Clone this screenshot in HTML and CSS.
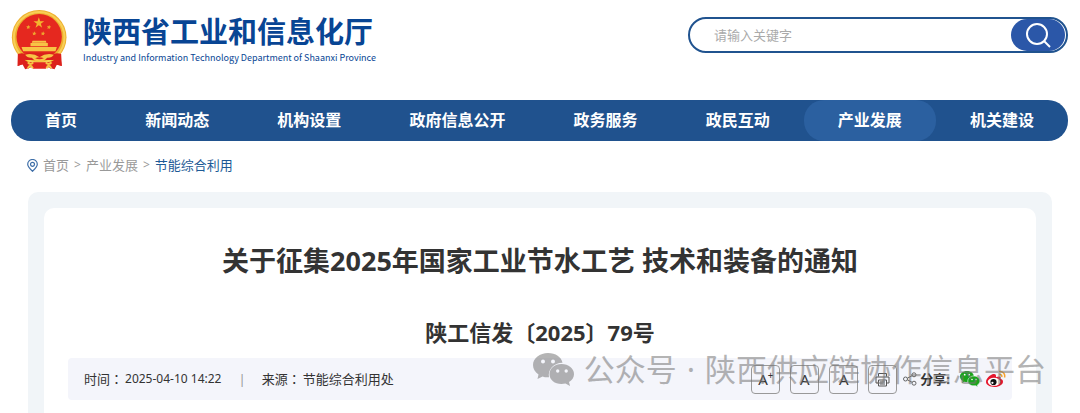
FILE: index.html
```html
<!DOCTYPE html>
<html lang="zh-CN">
<head>
<meta charset="utf-8">
<meta name="viewport" content="width=device-width, initial-scale=1">
<title>陕西省工业和信息化厅</title>
<link rel="stylesheet" href="styles.css">
</head>
<body>
<header class="header">
    <div class="brand">
        <svg class="emblem" viewBox="0 0 170 180" aria-hidden="true">
            <path d="M26 118 L20 168 L34 163 L42 178 L60 172 L85 158 L110 172 L130 178 L137 164 L152 168 L144 118 Z" fill="#d9201c"/>
            <circle cx="84" cy="82" r="82" fill="#eeb02e"/>
            <circle cx="84" cy="82" r="76" fill="none" stroke="#f8cf57" stroke-width="6"/>
            <circle cx="84" cy="80" r="68" fill="#e5281f"/>
            <path d="M83 22 L87 34 L99 34 L89 41 L93 53 L83 46 L73 53 L77 41 L67 34 L79 34 Z" fill="#f3b62f"/>
            <g fill="#efa52e">
                <path d="M52 45 L54 49 L58 50 L54 53 L55 57 L51 55 L47 57 L48 52 L45 49 L50 49 Z"/>
                <path d="M114 45 L116 49 L120 50 L116 53 L117 57 L113 55 L109 57 L110 52 L107 49 L112 49 Z"/>
                <path d="M70 64 L72 68 L76 69 L72 72 L73 76 L69 74 L65 76 L66 71 L63 68 L68 68 Z"/>
                <path d="M96 64 L98 68 L102 69 L98 72 L99 76 L95 74 L91 76 L92 71 L89 68 L94 68 Z"/>
            </g>
            <path d="M64 92 H104 L106 98 H62 Z M58 99 H110 V109 H58 Z M31 111 H137 L133 124 H36 Z" fill="#f7c445"/>
            <path d="M20 132 Q34 126 50 134 L42 152 L58 162 L52 176 L34 163 L19 168 Z" fill="#dc211c"/>
            <path d="M150 132 Q136 126 120 134 L128 152 L112 162 L118 176 L136 163 L152 168 Z" fill="#dc211c"/>
            <path d="M46 128 H124 L128 150 H42 Z" fill="#d9201c"/>
            <path d="M42 134 Q66 128 85 142 Q104 128 128 134 Q122 144 108 143 Q98 155 85 155 Q72 155 62 143 Q48 144 42 134 Z" fill="#f7c445"/>
            <path d="M72 145 Q85 138 98 145 Q85 151 72 145 Z" fill="#e2261f"/>
            <path d="M56 157 L84 157 L114 157 L104 176 H66 Z" fill="#e2261f"/>
            <path d="M50 157 Q58 167 66 157 M104 157 Q112 167 121 157 M50 175 Q58 160 65 175 M106 175 Q112 160 120 175" fill="none" stroke="#f7c445" stroke-width="6"/>
        </svg>
        <div>
            <div class="brand-name">陕西省工业和信息化厅</div>
            <div class="brand-sub">Industry and Information Technology Department of Shaanxi Province</div>
        </div>
    </div>
    <form class="search">
        <input class="search-input" type="text" placeholder="请输入关键字" aria-label="请输入关键字">
        <button class="search-button" type="submit" aria-label="搜索">
            <svg width="26" height="26" viewBox="0 0 26 26" fill="none" stroke="#fff" stroke-width="2">
                <circle cx="12" cy="12" r="10"/>
                <path d="M19 19 L25 25"/>
            </svg>
        </button>
    </form>
</header>

<nav class="nav">
    <a href="#">首页</a>
    <a href="#">新闻动态</a>
    <a href="#">机构设置</a>
    <a href="#">政府信息公开</a>
    <a href="#">政务服务</a>
    <a href="#">政民互动</a>
    <a href="#" class="active">产业发展</a>
    <a href="#">机关建设</a>
</nav>

<div class="crumbs">
    <svg width="11" height="13" viewBox="0 0 11 13" fill="none" stroke="#3f6fa8" aria-hidden="true">
        <path d="M5.500 12.300 C3 10 .7 7.800 .7 5.300 A4.800 4.800 0 0 1 10.300 5.300 C10.300 7.800 8 10 5.500 12.300 Z" stroke-width="1.200"/>
        <circle cx="5.500" cy="5.300" r="2" stroke-width="1.200"/>
    </svg>
    <a href="#">首页</a>
    <span>&gt;</span>
    <a href="#">产业发展</a>
    <span>&gt;</span>
    <a href="#" class="current">节能综合利用</a>
</div>

<main class="panel">
    <article class="article">
        <h1>关于征集2025年国家工业节水工艺 技术和装备的通知</h1>
        <h2>陕工信发〔2025〕79号</h2>
        <div class="meta">
            <span>时间<span class="colon" lang="zh-TW">：</span></span>
            <span class="value date">2025-04-10 14:22</span>
            <span class="divider">|</span>
            <span>来源<span class="colon" lang="zh-TW">：</span></span>
            <span class="value">节能综合利用处</span>
            <div class="tools">
                <button class="tool" type="button" aria-label="放大字体">A<sup>+</sup></button>
                <button class="tool" type="button">A</button>
                <button class="tool" type="button">A</button>
                <button class="tool" type="button" aria-label="打印">
                    <svg width="15" height="15" viewBox="0 0 15 15" fill="none" stroke="#555">
                        <path d="M3.500 4.500 V1.500 H11.500 V4.500 M3.500 11 H1 V5 H14 V11 H11.500 M3.500 8 H11.500 V14 H3.500 Z M5 10 H10 M5 12 H10"/>
                    </svg>
                </button>
                <svg class="share-icon" width="14" height="14" viewBox="0 0 14 14" fill="none" stroke="#666" aria-hidden="true">
                    <circle cx="2.500" cy="7" r="2"/>
                    <circle cx="11" cy="2.800" r="2"/>
                    <circle cx="11" cy="11.200" r="2"/>
                    <path d="M4.300 6.200 L9.200 3.700 M4.300 7.800 L9.200 10.300"/>
                </svg>
                <span class="share-label">分享:</span>
                <a href="#" class="share-link" aria-label="微信">
                    <svg width="20" height="18" viewBox="0 0 20 18">
                        <path d="M7 1 C3 1 0 3.400 0 6.500 C0 8.400 1 9.900 2.600 10.900 L2 13 L4.500 11.700 C9 12.800 13.800 10.500 13.800 6.500 C13.800 3.400 11 1 7 1 Z" fill="#18a51b"/>
                        <path d="M14 6 C10.500 6 7.800 8.200 7.800 11 C7.800 14.200 11.500 16.500 15.600 15.700 L18 17 L17.400 15 C19 14 20 12.600 20 11 C20 8.200 17.500 6 14 6 Z" fill="#18a51b" stroke="#f4f5fb" stroke-width=".6"/>
                        <g fill="#fff"><circle cx="4.700" cy="4.700" r=".9"/><circle cx="9.200" cy="4.700" r=".9"/><circle cx="12" cy="9.500" r=".8"/><circle cx="16" cy="9.500" r=".8"/></g>
                    </svg>
                </a>
                <a href="#" class="share-link" aria-label="微博">
                    <svg width="20" height="18" viewBox="0 0 20 18">
                        <path d="M7.500 4 C4.500 4.500 0 8.500 0 11.800 C0 15 4 17 8.500 17 C13.500 17 17 14.300 17 11.700 C17 10 15.800 9.200 14.500 8.800 C15.200 6.500 13.500 5.800 10 7.200 C10.400 5 9.500 3.700 7.500 4 Z" fill="#e6162d"/>
                        <ellipse cx="8" cy="11.800" rx="6.200" ry="4" fill="#fff"/>
                        <circle cx="7.500" cy="12" r="3.100" fill="#111"/>
                        <circle cx="6.400" cy="12.800" r="1.100" fill="#fff"/>
                        <path d="M13 1.500 C17 .8 19.500 4 18.500 7.500 M13.300 4.500 C15.200 4.200 16.200 5.500 15.700 7" fill="none" stroke="#f7a12c" stroke-width="1.500"/>
                    </svg>
                </a>
            </div>
            <div class="watermark">
                <svg width="41" height="34" viewBox="0 0 41 34" aria-hidden="true">
                    <path fill-rule="evenodd" d="M15 1 C7 1 0 6 0 13 C0 17 2 20 5.500 22.500 L4.500 27 L9.500 24.500 C11.500 25.200 13.500 25.500 16 25.300 C14.500 17 21.500 10.500 29.500 10.700 C28.500 5 22.500 1 15 1 Z M8 9.500 a2 2 0 1 0 4 0 a2 2 0 1 0 -4 0 Z M18 9.500 a2 2 0 1 0 4 0 a2 2 0 1 0 -4 0 Z"/>
                    <path fill-rule="evenodd" d="M28.500 12 C21.500 12 16.500 16.500 16.500 22.200 C16.500 29 24 33.500 32.500 31.500 L37 34 L36 30 C39 28 41 25.500 41 22.200 C41 16.500 35.500 12 28.500 12 Z M23 19 a1.700 1.700 0 1 0 3.400 0 a1.700 1.700 0 1 0 -3.400 0 Z M31.500 19 a1.700 1.700 0 1 0 3.400 0 a1.700 1.700 0 1 0 -3.400 0 Z"/>
                </svg>
                <span>公众号</span>
                <span>·</span>
                <span>陕西供应链协作信息平台</span>
            </div>
        </div>
    </article>
</main>
</body>
</html>
```
FILE: styles.css
```css
* {
    box-sizing: border-box;
}

body {
    display: flex;
    flex-direction: column;
    min-height: 100vh;
    margin: 0;
    background: #fff;
    color: #333;
    font-family: "Noto Sans", "Noto Sans CJK SC", sans-serif;
    font-size: 13px;
    line-height: 20px;
}

a {
    color: inherit;
    text-decoration: none;
}

svg {
    display: block;
    flex: none;
}

.header {
    display: flex;
    justify-content: space-between;
    align-items: flex-start;
    height: 100px;
    padding: 10px 12px 0 11px;
}

.brand {
    display: flex;
    gap: 15px;
    color: #084594;
    white-space: nowrap;
}

.emblem {
    width: 57px;
    height: 60px;
}

.brand-name {
    margin-top: 4px;
    font-size: 29px;
    font-weight: bold;
    line-height: 36px;
}

.brand-sub {
    font-family: "Noto Sans CJK SC", sans-serif;
    font-size: 9px;
    line-height: 16px;
}

.search {
    display: flex;
    width: 380px;
    height: 36px;
    margin-top: 7px;
    border: 2px solid #20538f;
    border-radius: 18px;
}

.search-input {
    flex: 1;
    min-width: 0;
    padding: 0 24px;
    border: 0;
    outline: 0;
    background: none;
    font: inherit;
}

.search-input::placeholder {
    color: #aaa;
}

.search-button {
    display: flex;
    align-items: center;
    justify-content: center;
    width: 54px;
    margin-right: 1px;
    padding: 0;
    border: 0;
    border-radius: 16px;
    background: #2b57a8;
}

.nav {
    display: flex;
    margin: 0 12px 0 11px;
    border-radius: 20px;
    background: #20528e;
    color: #fff;
    font-size: 16px;
    font-weight: bold;
    line-height: 41px;
    white-space: nowrap;
}

.nav a {
    flex: 1 1 auto;
    padding: 0 33px;
    border-radius: 20px;
    text-align: center;
}

.nav .active {
    background: #2b60a0;
}

.crumbs {
    display: flex;
    align-items: center;
    gap: 5px;
    margin: 14px 27px 17px;
    color: #999;
}

.crumbs span {
    font-size: 12px;
}

.crumbs .current {
    color: #1d5a96;
}

.panel {
    display: flex;
    flex: 1;
    margin: 0 28px;
    padding: 16px 16px 0;
    border-radius: 10px 10px 0 0;
    background: #f1f5f8;
}

.article {
    flex: 1;
    padding: 32px 24px 12px;
    border-radius: 10px 10px 0 0;
    background: #fff;
}

h1 {
    margin: 0;
    font-size: 27px;
    line-height: 42px;
    text-align: center;
}

h2 {
    margin: 32px 0 8px;
    font-size: 22px;
    line-height: 36px;
    text-align: center;
}

.meta {
    position: relative;
    display: flex;
    align-items: center;
    height: 42px;
    padding: 0 6px 0 16px;
    border-radius: 4px;
    background: #f4f5fb;
    white-space: nowrap;
}

.colon {
    font-family: "Noto Sans CJK TC", sans-serif;
}

.value {
    margin-left: 2px;
}

.date {
    font-size: 12px;
}

.divider {
    margin: 0 16px 0 17px;
    color: #999;
}

.tools {
    display: flex;
    align-items: center;
    gap: 10px;
    margin-left: auto;
}

.tool {
    display: flex;
    align-items: center;
    justify-content: center;
    width: 29px;
    height: 29px;
    padding: 0;
    border: 1px solid #999;
    border-radius: 4px;
    background: none;
    color: #333;
    font: inherit;
    font-size: 15px;
}

.tool sup {
    font-size: 10px;
    line-height: 10px;
    align-self: flex-start;
    margin-top: 4px;
}

.share-icon {
    margin-left: -4px;
}

.share-label {
    margin-left: -7px;
    font-weight: bold;
}

.share-link + .share-link {
    margin-left: -4px;
}

/* account mark laid over the info bar */
.watermark {
    position: absolute;
    top: -7px;
    right: -34px;
    display: flex;
    align-items: center;
    gap: 10px;
    color: #777;
    fill: #777;
    font-size: 31px;
    line-height: 36px;
    opacity: .55;
    pointer-events: none;
}
```
